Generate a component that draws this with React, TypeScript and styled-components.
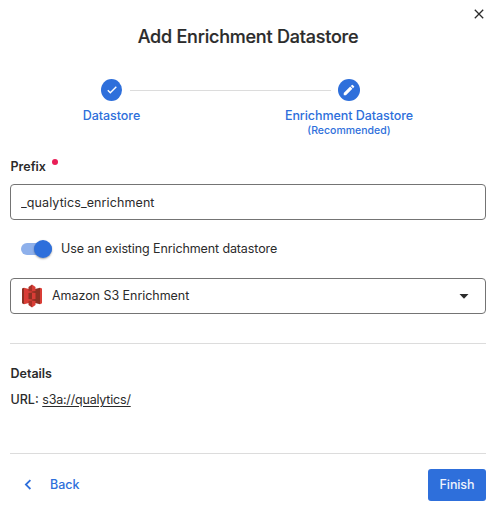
import React from "react";
import styled, { createGlobalStyle } from "styled-components";

const blue = "#2e6fdb";
const ink = "#2b2b2b";

const GlobalStyle = createGlobalStyle`
  *, *::before, *::after { box-sizing: border-box; }
  body { margin: 0; background: #fff; }
  button, input { font: inherit; letter-spacing: inherit; }
`;

const Dialog = styled.div`
  display: flex;
  flex-direction: column;
  width: 495px;
  height: 515px;
  padding: 6px 9px 14px 10px;
  background: #fff;
  color: ${ink};
  font: 400 13px/20px Inter, sans-serif;
  overflow: hidden;
`;

const CloseButton = styled.button`
  display: flex;
  align-items: center;
  justify-content: center;
  align-self: flex-end;
  width: 16px;
  height: 16px;
  margin-right: -1px;
  padding: 0;
  border: 0;
  background: none;
  color: ${ink};
`;

const Title = styled.h1`
  margin: 2px 0 0;
  font-size: 18px;
  line-height: 26px;
  font-weight: 500;
  text-align: center;
  letter-spacing: -0.22px;
  -webkit-text-stroke: 0.2px ${ink};
`;

const Stepper = styled.div`
  display: grid;
  grid-template-columns: 203px 70px 203px;
  margin-top: 29px;
`;

const Step = styled.div<{ $end?: boolean }>`
  grid-row: 1;
  grid-column: ${(p) => (p.$end ? 3 : 1)};
  display: flex;
  flex-direction: column;
  align-items: center;
  margin-left: ${(p) => (p.$end ? "-71px" : "0")};
  width: ${(p) => (p.$end ? "274px" : "203px")};
  color: ${blue};
`;

const StepBadge = styled.div<{ $narrow?: boolean }>`
  display: flex;
  align-items: center;
  justify-content: center;
  width: ${(p) => (p.$narrow ? 21 : 22)}px;
  height: 22px;
  border-radius: 50%;
  background: ${blue};
`;

const StepLine = styled.div`
  grid-row: 1;
  grid-column: 1 / 4;
  height: 1px;
  margin: 11px 155px 0 120px;
  background: #dcdcdc;
`;

const StepLabel = styled.div`
  margin-top: 6px;
  font-size: 12.5px;
  line-height: 18px;
  font-weight: 500;
  letter-spacing: -0.06px;
  white-space: nowrap;
`;

const StepNote = styled.div`
  font-size: 10.5px;
  line-height: 12px;
  font-weight: 500;
`;

const FieldLabel = styled.label`
  display: flex;
  align-items: flex-start;
  gap: 6px;
  height: 20px;
  margin-top: 20px;
  padding-left: 0.5px;
  font-size: 12.5px;
  font-weight: 600;
`;

const RequiredDot = styled.span`
  width: 6px;
  height: 6px;
  margin-top: 2px;
  border-radius: 50%;
  background: #e91e57;
`;

const TextInput = styled.input`
  width: 476px;
  height: 36px;
  margin-top: 7px;
  padding: 1px 10px 0;
  border: 1px solid #747474;
  border-radius: 4px;
  background: #fff;
  color: ${ink};
  font-size: 12.5px;
  letter-spacing: 0.1px;
  outline: none;
`;

const SwitchRow = styled.div`
  display: flex;
  align-items: center;
  gap: 9px;
  height: 20px;
  margin: 19px 0 0 11px;
  font-size: 12.5px;
  letter-spacing: -0.11px;
`;

const SwitchTrack = styled.div`
  display: flex;
  align-items: center;
  justify-content: flex-end;
  width: 31px;
  height: 12px;
  border-radius: 6px;
  background: #8eb0eb;
`;

const SwitchThumb = styled.div`
  flex: none;
  width: 18px;
  height: 18px;
  border-radius: 50%;
  background: ${blue};
  box-shadow: 0 1px 2px rgba(0, 0, 0, 0.35);
`;

const Select = styled.div`
  display: flex;
  align-items: center;
  width: 476px;
  height: 36px;
  margin-top: 19px;
  padding: 0 16px 0 11px;
  border: 1px solid #747474;
  border-radius: 4px;
  font-size: 12.5px;
`;

const SelectText = styled.span`
  flex: 1;
  margin-left: 10px;
  letter-spacing: -0.04px;
`;

const Divider = styled.hr<{ $gap: number }>`
  flex: none;
  width: 476px;
  height: 1px;
  margin: ${(p) => p.$gap}px 0 0;
  border: 0;
  background: #dcdcdc;
`;

const DetailsTitle = styled.h2`
  margin: 20px 0 0 0.5px;
  font-size: 12.5px;
  line-height: 20px;
  font-weight: 600;
`;

const DetailRow = styled.div`
  margin: 6px 0 0 0.5px;
  font-size: 12.5px;
`;

const DetailKey = styled.span`
  font-weight: 500;
`;

const UrlText = styled.span`
  letter-spacing: -0.2px;
  text-decoration: underline;
  text-underline-offset: 2px;
`;

const Footer = styled.div`
  display: flex;
  align-items: center;
  justify-content: space-between;
  width: 476px;
  margin-top: 15px;
`;

const BackButton = styled.button`
  display: flex;
  align-items: center;
  gap: 18px;
  padding: 0 0 0 14px;
  border: 0;
  background: none;
  color: ${blue};
  font-size: 12.5px;
  font-weight: 500;
`;

const FinishButton = styled.button`
  width: 58px;
  height: 32px;
  padding: 0;
  border: 0;
  border-radius: 3px;
  background: ${blue};
  color: #eef3fd;
  font-size: 12.5px;
  font-weight: 500;
  letter-spacing: -0.1px;
`;

const S3Icon = () => (
  <svg width="20" height="24" viewBox="0 0 20 24">
    <path d="M0 4.6 2 3.8v16.4L0 19.3Z" fill="#8c3123" />
    <path d="M2 3.8 10 5.8v12.4L2 20.2Z" fill="#d93d36" />
    <path d="M10 5.8 18 3.8v16.4l-8-2Z" fill="#8c3123" />
    <path d="m18 3.8 2 .8v14.7l-2 .9Z" fill="#d93d36" />
    <path d="m6.5 3 3.5-2.5v7L6.5 7Z" fill="#a83228" />
    <path d="M10 .5 13.5 3v4L10 7.5Z" fill="#d93d36" />
    <path d="m6.5 17 3.5-.5v7L6.5 21Z" fill="#a83228" />
    <path d="m10 16.5 3.5.5v4L10 23.5Z" fill="#d93d36" />
    <path d="m6.5 9 3.5-.5v7L6.5 15Z" fill="#8c3123" />
    <path d="m10 8.5 3.5.5v6l-3.5.5Z" fill="#d93d36" />
  </svg>
);

export default function App() {
  return (
    <>
      <GlobalStyle />
      <Dialog role="dialog" aria-label="Add Enrichment Datastore">
        <CloseButton aria-label="Close">
          <svg width="10" height="10" viewBox="0 0 10 10" fill="none" stroke="currentColor" strokeWidth="1.3">
            <path d="m.8.8 8.4 8.4M9.2.8.8 9.2" />
          </svg>
        </CloseButton>
        <Title>Add Enrichment Datastore</Title>
        <Stepper>
          <Step>
            <StepBadge $narrow>
              <svg width="10" height="8" viewBox="0 0 10 8" fill="none" stroke="#fff" strokeWidth="1.4">
                <path d="m.8 4.2 2.5 2.5L9.3.8" />
              </svg>
            </StepBadge>
            <StepLabel>Datastore</StepLabel>
          </Step>
          <StepLine />
          <Step $end>
            <StepBadge>
              <svg width="14" height="14" viewBox="0 0 24 24" fill="#fff">
                <path d="M3 17.25V21h3.75L17.81 9.94l-3.75-3.75L3 17.25ZM20.71 7.04a1 1 0 0 0 0-1.41l-2.34-2.34a1 1 0 0 0-1.41 0l-1.83 1.83 3.75 3.75 1.83-1.83Z" />
              </svg>
            </StepBadge>
            <StepLabel>Enrichment Datastore</StepLabel>
            <StepNote>(Recommended)</StepNote>
          </Step>
        </Stepper>
        <FieldLabel htmlFor="prefix">
          Prefix
          <RequiredDot />
        </FieldLabel>
        <TextInput id="prefix" defaultValue="_qualytics_enrichment" />
        <SwitchRow>
          <SwitchTrack role="switch" aria-checked="true">
            <SwitchThumb />
          </SwitchTrack>
          Use an existing Enrichment datastore
        </SwitchRow>
        <Select>
          <S3Icon />
          <SelectText>Amazon S3 Enrichment</SelectText>
          <svg width="10" height="5" viewBox="0 0 10 5" fill={ink}>
            <path d="M.5 0h9L5 4.7Z" />
          </svg>
        </Select>
        <Divider $gap={29} />
        <DetailsTitle>Details</DetailsTitle>
        <DetailRow>
          <DetailKey>URL:</DetailKey> <UrlText>s3a://qualytics/</UrlText>
        </DetailRow>
        <Divider $gap={43} />
        <Footer>
          <BackButton>
            <svg width="8" height="12" viewBox="0 0 8 12" fill="none" stroke="currentColor" strokeWidth="1.8">
              <path d="M6.4 1.2 1.9 5.6l4.5 4.4" />
            </svg>
            Back
          </BackButton>
          <FinishButton>Finish</FinishButton>
        </Footer>
      </Dialog>
    </>
  );
}
